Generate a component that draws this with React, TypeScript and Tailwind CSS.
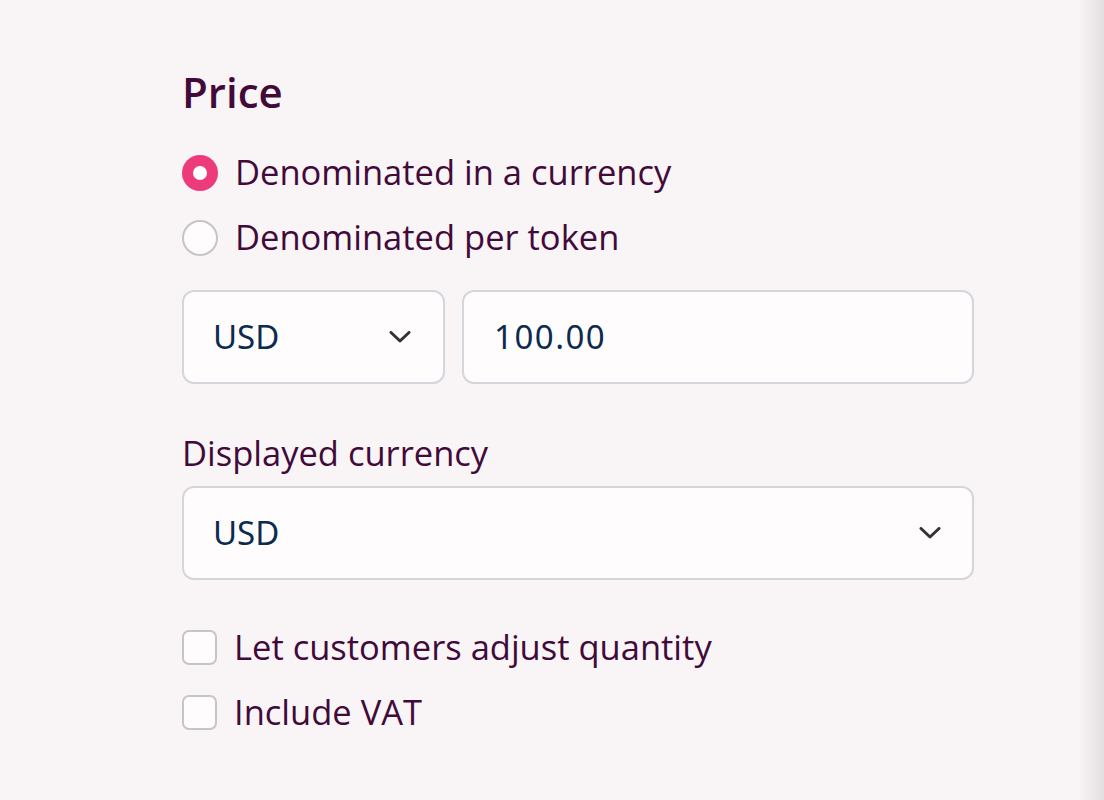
import React from "react";

function Chevron() {
  return (
    <svg width="22" height="12" viewBox="0 0 22 12" fill="none">
      <path d="M2 1.5 L11 10 L20 1.5" stroke="#333333" strokeWidth="3" strokeLinecap="round" strokeLinejoin="round" />
    </svg>
  );
}

export default function App() {
  const label = "text-[#420a3a] text-[34.5px] leading-none [font-family:'Open_Sans',sans-serif]";
  const inputText = "text-[#0c2c4f] text-[33px] [font-family:'Noto_Sans',sans-serif]";
  return (
    <div className="min-h-screen flex bg-[#f9f5f6]">
      <div className="flex-1 pt-[68px] pl-[182px]">
        <div className="w-[792px] flex flex-col">
          <h2 className="text-[42px] leading-[48px] font-semibold text-[#420a3a] [font-family:'Open_Sans',sans-serif]">Price</h2>
          <div className="mt-[24px] flex flex-col">
            <div className="h-[65px] flex items-center gap-[17px]">
              <span className="w-[36px] h-[36px] rounded-full bg-[#ec3a7a] flex items-center justify-center">
                <span className="w-[14px] h-[14px] rounded-full bg-white" />
              </span>
              <span className={label}>Denominated in a currency</span>
            </div>
            <div className="h-[65px] flex items-center gap-[17px]">
              <span className="w-[36px] h-[36px] rounded-full border-2 border-[#c6c4c6] bg-[#fffcfd]" />
              <span className={label}>Denominated per token</span>
            </div>
          </div>
          <div className="mt-[20px] flex gap-[17px]">
            <div className="w-[263px] h-[94px] rounded-[12px] border-2 border-[#d4d6dc] bg-[#fffcfd] flex items-center justify-between pl-[29px] pr-[32px]">
              <span className={inputText}>USD</span>
              <Chevron />
            </div>
            <div className="flex-1 h-[94px] rounded-[12px] border-2 border-[#d4d6dc] bg-[#fffcfd] flex items-center pl-[30px]">
              <span className={`${inputText} tracking-[1.5px]`}>100.00</span>
            </div>
          </div>
          <div className="mt-[46px] h-[46px] flex items-center">
            <span className={label}>Displayed currency</span>
          </div>
          <div className="mt-[10px] h-[94px] rounded-[12px] border-2 border-[#d4d6dc] bg-[#fffcfd] flex items-center justify-between pl-[29px] pr-[31px]">
            <span className={inputText}>USD</span>
            <Chevron />
          </div>
          <div className="mt-[35px] flex flex-col">
            <div className="h-[65px] flex items-center gap-[17px]">
              <span className="w-[35px] h-[35px] rounded-[7px] border-2 border-[#c6c4c6] bg-[#fffcfd]" />
              <span className={label}>Let customers adjust quantity</span>
            </div>
            <div className="h-[65px] flex items-center gap-[17px]">
              <span className="w-[35px] h-[35px] rounded-[7px] border-2 border-[#c6c4c6] bg-[#fffcfd]" />
              <span className={label}>Include VAT</span>
            </div>
          </div>
        </div>
      </div>
      <div className="w-[26px] bg-gradient-to-r from-[#f9f5f6] to-[#e4dfe1]" />
    </div>
  );
}
